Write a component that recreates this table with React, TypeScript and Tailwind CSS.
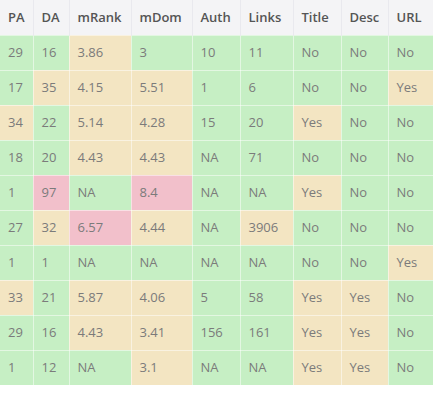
import React from "react";

const G = "bg-[#c6efc4]";
const Y = "bg-[#f3e5c2]";
const P = "bg-[#f2c0cb]";

const widths = ["w-[33px]", "w-[36px]", "w-[62px]", "w-[61px]", "w-[48px]", "w-[53px]", "w-[48px]", "w-[47px]", "w-[45px]"];
const headers = ["PA", "DA", "mRank", "mDom", "Auth", "Links", "Title", "Desc", "URL"];

type Cell = [string, string];
const rows: Cell[][] = [
  [["29", G], ["16", G], ["3.86", Y], ["3", G], ["10", G], ["11", G], ["No", G], ["No", G], ["No", G]],
  [["17", G], ["35", Y], ["4.15", Y], ["5.51", Y], ["1", G], ["6", G], ["No", G], ["No", G], ["Yes", Y]],
  [["34", Y], ["22", G], ["5.14", Y], ["4.28", Y], ["15", G], ["20", G], ["Yes", Y], ["No", G], ["No", G]],
  [["18", G], ["20", G], ["4.43", Y], ["4.43", Y], ["NA", G], ["71", G], ["No", G], ["No", G], ["No", G]],
  [["1", G], ["97", P], ["NA", G], ["8.4", P], ["NA", G], ["NA", G], ["Yes", Y], ["No", G], ["No", G]],
  [["27", G], ["32", Y], ["6.57", P], ["4.44", Y], ["NA", G], ["3906", Y], ["No", G], ["No", G], ["No", G]],
  [["1", G], ["1", G], ["NA", G], ["NA", G], ["NA", G], ["NA", G], ["No", G], ["No", G], ["Yes", Y]],
  [["33", Y], ["21", G], ["5.87", Y], ["4.06", Y], ["5", G], ["58", G], ["Yes", Y], ["Yes", Y], ["No", G]],
  [["29", G], ["16", G], ["4.43", Y], ["3.41", Y], ["156", G], ["161", G], ["Yes", Y], ["Yes", Y], ["No", G]],
  [["1", G], ["12", G], ["NA", G], ["3.1", Y], ["NA", G], ["NA", G], ["Yes", Y], ["Yes", Y], ["No", G]],
];

export default function App() {
  return (
    <div className="w-[441px] h-[408px] bg-white" style={{ fontFamily: '"Open Sans", sans-serif' }}>
      <table className="w-[433px] border-collapse table-fixed text-[13px]">
        <thead>
          <tr className="bg-[#f4f4f6] h-[35px]">
            {headers.map((h, i) => (
              <th
                key={h}
                className={`${widths[i]} text-left font-semibold text-[#555] pl-2 pr-0 border-x border-[#e9e9ee] first:border-l-0 last:border-r-0`}
              >
                {h}
              </th>
            ))}
          </tr>
        </thead>
        <tbody>
          {rows.map((r, ri) => (
            <tr key={ri} className="h-[35px]">
              {r.map(([v, c], ci) => (
                <td
                  key={ci}
                  className={`${c} text-[#7b7b7b] pl-2 border border-white/50 first:border-l-0 last:border-r-0`}
                >
                  {v}
                </td>
              ))}
            </tr>
          ))}
        </tbody>
      </table>
    </div>
  );
}
